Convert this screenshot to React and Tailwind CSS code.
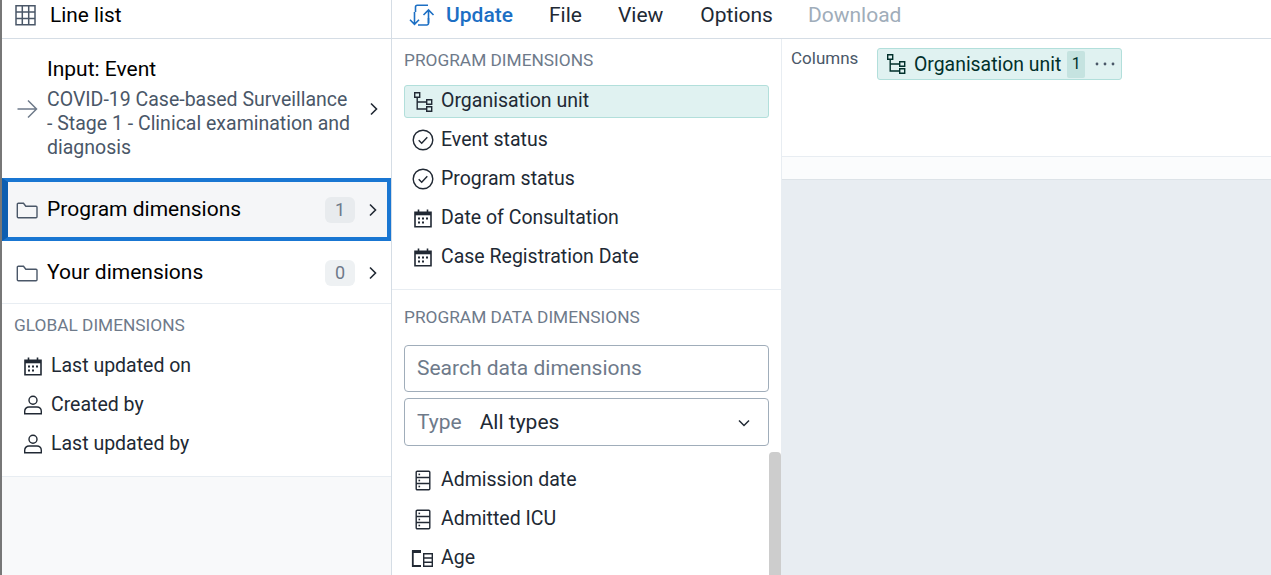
import React from 'react'

const Svg = ({ size = 22, box = 16, className = '', children }) => (
    <svg width={size} height={size} viewBox={`0 0 ${box} ${box}`} fill="none" stroke="currentColor" strokeWidth="1" className={`shrink-0 ${className}`}>
        {children}
    </svg>
)

const TableIcon = () => (
    <Svg size={22} box={22} className="text-[#4a5768] -mt-[2px]">
        <path strokeWidth="1.5" d="M1 1.7h19v19H1zM1 8h19M1 14.5h19M7.3 1.7v19M13.7 1.7v19" />
    </Svg>
)

const UpdateIcon = () => (
    <svg width="26" height="24" viewBox="0 0 26 24" fill="none" stroke="#1c6fc4" strokeWidth="1.6" className="shrink-0">
        <path d="M6.5 8V3a1.8 1.8 0 0 1 1.8-1.8H19M19.5 14v5.2a1.8 1.8 0 0 1-1.8 1.8H9" />
        <path d="M5.5 8v12M1 15.8l4.5 4.5 4.5-4.5M19.5 19V6.5M14.5 11l5-5 5 5" />
    </svg>
)

const ArrowRight = () => (
    <Svg size={22} box={22} className="text-[#6e7a8a]">
        <path strokeWidth="1.5" d="M1.5 11h18.5M12 2.5l8.5 8.5-8.5 8.5" />
    </Svg>
)

const Chevron = () => (
    <svg width="10" height="14" viewBox="0 0 10 14" fill="none" stroke="#212934" strokeWidth="1.6" className="shrink-0">
        <path d="M2 1.5L7.5 7 2 12.5" />
    </svg>
)

const Folder = () => (
    <Svg size={22} box={22} className="text-[#4a5768]">
        <path strokeWidth="1.4" d="M1.3 17.7V5.2a1 1 0 0 1 1-1h5.2l2.3 3h10.2a1 1 0 0 1 1 1v9.5a1 1 0 0 1-1 1H2.3a1 1 0 0 1-1-1z" />
    </Svg>
)

const OrgIcon = ({ className = 'text-[#212934]' }) => (
    <Svg size={22} box={22} className={className}>
        <path strokeWidth="1.4" d="M2.7 1.7h5v4.6h-5zM14.7 8.7h5v4.6h-5zM14.7 15.7h5v4.6h-5zM5.2 6.3V18h9.5M5.2 11h9.5" />
    </Svg>
)

const CheckCircle = () => (
    <Svg size={22} box={22} className="text-[#212934]">
        <circle cx="11" cy="11" r="9.8" strokeWidth="1.4" />
        <path strokeWidth="1.4" d="M6.7 11.3l3 3 5.6-6" />
    </Svg>
)

const CalendarIcon = () => (
    <Svg size={22} box={22} className="text-[#212934]">
        <path strokeWidth="1.6" d="M3 5.3h16v14.5H3zM6.5 2.5v3M15.5 2.5v3" />
        <path strokeWidth="3" d="M3 6.8h16" />
        <g fill="currentColor" stroke="none">
            <rect x="6" y="10.5" width="2" height="2" />
            <rect x="10" y="10.5" width="2" height="2" />
            <rect x="14" y="10.5" width="2" height="2" />
            <rect x="6" y="14.5" width="2" height="2" />
            <rect x="10" y="14.5" width="2" height="2" />
        </g>
    </Svg>
)

const UserIcon = () => (
    <Svg size={22} box={22} className="text-[#212934]">
        <circle cx="11" cy="6.2" r="4" strokeWidth="1.4" />
        <path strokeWidth="1.4" d="M2.7 19.8v-2.6c0-2.6 2-4.2 4.3-4.2h8c2.3 0 4.3 1.6 4.3 4.2v2.6z" />
    </Svg>
)

const DataIcon = () => (
    <Svg size={22} box={22} className="text-[#212934]">
        <rect x="4.2" y="2.2" width="13.6" height="18.6" rx="1" strokeWidth="1.4" />
        <path strokeWidth="1.4" d="M4.2 8.5h13.6M4.2 14.5h13.6" />
        <g fill="currentColor" stroke="none">
            <rect x="6.5" y="4.6" width="1.6" height="1.6" />
            <rect x="6.5" y="10.7" width="1.6" height="1.6" />
            <rect x="6.5" y="16.7" width="1.6" height="1.6" />
        </g>
    </Svg>
)

const AgeIcon = () => (
    <Svg size={24} box={24} className="text-[#212934] -ml-[2px]">
        <path strokeWidth="1.8" d="M11 20H2.8V5.5h8" />
        <path strokeWidth="3" d="M2 5.5h9" />
        <path strokeWidth="1.4" d="M13.7 7.7h8.6v12.6h-8.6zM13.7 12h8.6M13.7 16.2h8.6" />
    </Svg>
)

const Badge = ({ value, active }) => (
    <span className={`w-[30px] h-[26px] rounded-[6px] flex items-center justify-center text-[18px] text-[#6e7a8a] mr-[13px] ${active ? 'bg-[#e8ebee]' : 'bg-[#eef1f3]'}`}>
        {value}
    </span>
)

const Heading = ({ children, className = '' }) => (
    <div className={`text-[17.3px] leading-[20px] text-[#6e7a8a] uppercase ${className}`}>{children}</div>
)

const Item = ({ icon, label, className = '' }) => (
    <div className={`h-[39px] flex items-center gap-[7px] text-[19.5px] text-[#212934] ${className}`}>
        {icon}
        <span>{label}</span>
    </div>
)

export default function App() {
    return (
        <div className="h-[575px] w-[1271px] overflow-hidden flex flex-col border-l-2 border-[#777] bg-[#e8edf2] text-[19.5px] font-['Roboto',sans-serif]">
            <div className="h-[39px] shrink-0 flex bg-white border-b border-[#d5dde5]">
                <div className="w-[390px] shrink-0 flex items-center gap-[13px] pl-[13px] pb-[6px] border-r border-[#d5dde5] text-[#000]">
                    <TableIcon />
                    <span className="text-[20.8px]">Line list</span>
                </div>
                <div className="flex items-center pl-[17px] pb-[6px] text-[21px] text-[#212934]">
                    <UpdateIcon />
                    <span className="ml-[11px] font-medium text-[#1c6fc4]">Update</span>
                    <span className="ml-[36px]">File</span>
                    <span className="ml-[36px]">View</span>
                    <span className="ml-[37px]">Options</span>
                    <span className="ml-[35px] text-[#a0adba]">Download</span>
                </div>
            </div>

            <div className="flex-1 flex min-h-0">
                <div className="w-[390px] shrink-0 flex flex-col bg-[#f8f9fa] border-r border-[#d5dde5]">
                    <div className="bg-white h-[139px] flex items-center pl-[14px] pr-[12px]">
                        <ArrowRight />
                        <div className="ml-[9px] flex-1">
                            <div className="text-[21px] leading-[24px] text-[#000] mb-[7px] -mt-[1px]">Input: Event</div>
                            <div className="w-[308px] leading-[24px] text-[#4a5768]">COVID-19 Case-based Surveillance - Stage 1 - Clinical examination and diagnosis</div>
                        </div>
                        <Chevron />
                    </div>
                    <div className="h-[63px] flex items-center bg-[#f5f6f8] border-[4px] border-[#1976d2] border-l-[6px] border-l-[#0d5eb0] pl-[8px] pr-[9px] text-[#000]">
                        <Folder />
                        <span className="ml-[9px] flex-1 text-[21px]">Program dimensions</span>
                        <Badge value="1" active />
                        <Chevron />
                    </div>
                    <div className="h-[63px] flex items-center bg-white border-b border-[#e8edf2] pl-[14px] pr-[13px] pt-[1px] text-[#000]">
                        <Folder />
                        <span className="ml-[9px] flex-1 text-[21px]">Your dimensions</span>
                        <Badge value="0" />
                        <Chevron />
                    </div>
                    <div className="bg-white h-[173px] border-b border-[#e8edf2] pl-[12px] pt-[11px]">
                        <Heading>Global dimensions</Heading>
                        <div className="mt-[11px] pl-[8px]">
                            <Item icon={<CalendarIcon />} label="Last updated on" />
                            <Item icon={<UserIcon />} label="Created by" />
                            <Item icon={<UserIcon />} label="Last updated by" />
                        </div>
                    </div>
                </div>

                <div className="w-[390px] shrink-0 relative flex flex-col bg-white border-r border-[#e8edf2]">
                    <div className="h-[251px] shrink-0 border-b border-[#e8edf2] px-[12px] pt-[11px]">
                        <Heading>Program dimensions</Heading>
                        <div className="mt-[15px] h-[33px] flex items-center gap-[7px] pl-[7px] bg-[#e0f2f1] border border-[#b2dfdb] rounded-[3px] text-[#212934]">
                            <OrgIcon />
                            <span className="pb-[2px]">Organisation unit</span>
                        </div>
                        <div className="mt-[2px] pl-[8px]">
                            <Item icon={<CheckCircle />} label="Event status" />
                            <Item icon={<CheckCircle />} label="Program status" />
                            <Item icon={<CalendarIcon />} label="Date of Consultation" />
                            <Item icon={<CalendarIcon />} label="Case Registration Date" />
                        </div>
                    </div>
                    <div className="px-[12px] pt-[17px]">
                        <Heading>Program data dimensions</Heading>
                        <div className="mt-[18px] h-[47px] flex items-center pl-[12px] border border-[#a0adba] rounded-[4px] text-[21px] text-[#6e7a8a]">
                            Search data dimensions
                        </div>
                        <div className="mt-[6px] h-[48px] flex items-center pl-[12px] pr-[17px] pt-[1px] border border-[#a0adba] rounded-[4px] text-[21px]">
                            <span className="text-[#6e7a8a]">Type</span>
                            <span className="ml-[18px] flex-1 text-[#212934]">All types</span>
                            <svg width="14" height="14" viewBox="0 0 14 14" fill="none" stroke="#212934" strokeWidth="1.5">
                                <path d="M2 4.5L7 9.5l5-5" />
                            </svg>
                        </div>
                        <div className="mt-[14px] pl-[8px]">
                            <Item icon={<DataIcon />} label="Admission date" />
                            <Item icon={<DataIcon />} label="Admitted ICU" />
                            <Item icon={<AgeIcon />} label="Age" className="gap-[5px]" />
                        </div>
                    </div>
                    <div className="absolute right-0 top-[413px] bottom-0 w-[12px] bg-[#cdcdcd] rounded-t-[4px]" />
                </div>

                <div className="flex-1 flex flex-col">
                    <div className="h-[118px] shrink-0 bg-white border-b border-[#e8edf2] flex items-start pl-[9px] pt-[9px]">
                        <span className="text-[17px] leading-[20px] text-[#4a5768] w-[86px]">Columns</span>
                        <div className="h-[32px] flex items-center pl-[7px] bg-[#e0f2f1] border border-[#b2dfdb] rounded-[3px] text-[#00302b]">
                            <OrgIcon className="text-[#00302b]" />
                            <span className="ml-[7px] text-[19.4px] leading-[30px] pt-[1px]">Organisation unit</span>
                            <span className="ml-[6px] w-[18px] h-[27px] rounded-[2px] bg-[#c5e3e0] flex items-center justify-center text-[16px]">1</span>
                            <svg width="20" height="4" viewBox="0 0 20 4" fill="#4a5768" className="ml-[10px] mr-[6px]">
                                <circle cx="2" cy="2" r="1.4" />
                                <circle cx="10" cy="2" r="1.4" />
                                <circle cx="18" cy="2" r="1.4" />
                            </svg>
                        </div>
                    </div>
                    <div className="h-[23px] shrink-0 bg-[#fbfcfd] border-b border-[#dde3e8]" />
                </div>
            </div>
        </div>
    )
}
